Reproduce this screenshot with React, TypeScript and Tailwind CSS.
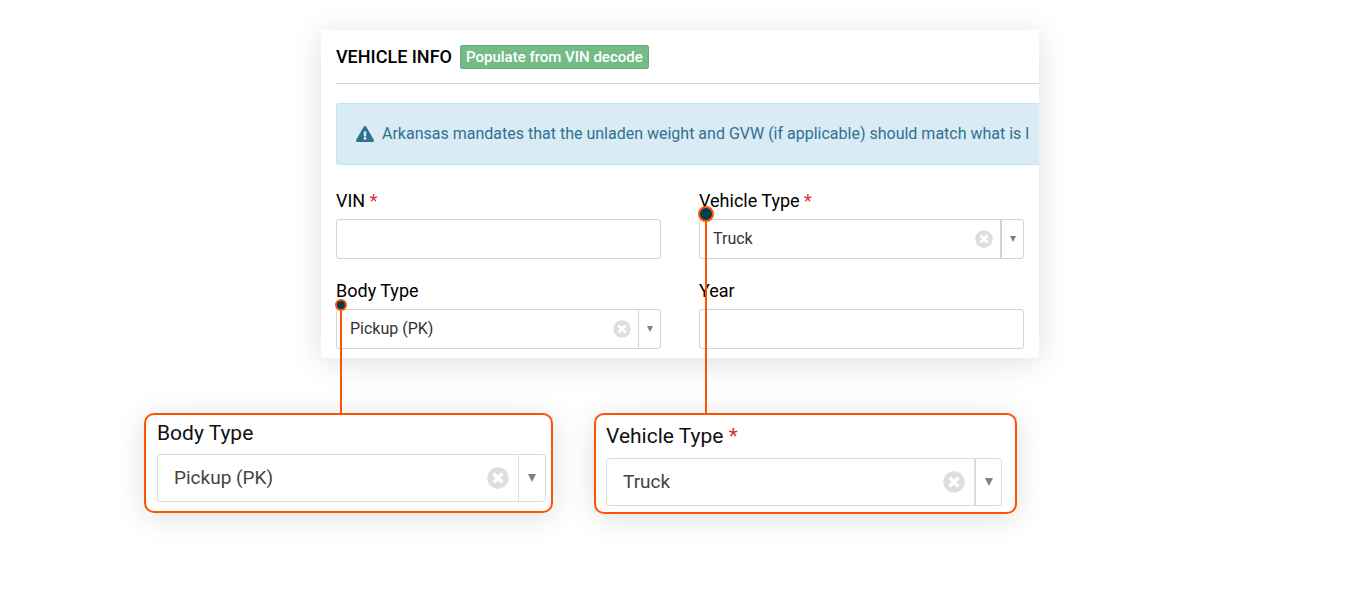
import React, { useRef, useState } from 'react';
import { FaExclamationTriangle, FaTimesCircle } from 'react-icons/fa';

type ComboProps = {
  id: string;
  options: string[];
  large?: boolean;
  thickDivider?: boolean;
};

type LabelProps = {
  htmlFor: string;
  text: string;
  required?: boolean;
  large?: boolean;
};

const FieldLabel = ({ htmlFor, text, required, large }: LabelProps) => (
  <label
    htmlFor={htmlFor}
    className={large ? 'block text-[21px] leading-[30px] text-[#111]' : 'mb-[5px] block text-[18px] leading-[27px] text-black'}
  >
    {text}
    {required && <span className="text-[#dc2f33]"> *</span>}
  </label>
);

const Combo = ({ id, options, large, thickDivider }: ComboProps) => {
  const [value, setValue] = useState(options[0]);
  const selectRef = useRef<HTMLSelectElement>(null);

  return (
    <div className={`flex items-stretch rounded-[3px] border bg-white ${large ? 'h-12 border-[#dcdcdc]' : 'h-10 border-[#d3d3d3]'}`}>
      <select
        ref={selectRef}
        id={id}
        value={value}
        onChange={(e) => setValue(e.target.value)}
        className={`min-w-0 flex-1 appearance-none bg-transparent outline-none ${large ? 'pl-4 text-[19px] text-[#444]' : 'pl-[13px] text-[16px] text-[#333]'}`}
      >
        <option value="" />
        {options.map((option) => (
          <option key={option} value={option}>{option}</option>
        ))}
      </select>

      <button
        type="button"
        aria-label="Clear selection"
        onClick={() => setValue('')}
        className={`flex items-center text-[#dedede] ${large ? 'px-[9px]' : 'px-[7px]'}`}
      >
        <FaTimesCircle size={large ? 22 : 18} />
      </button>

      <button
        type="button"
        aria-label="Show options"
        onClick={() => selectRef.current?.showPicker()}
        className={`flex items-center justify-center text-[#808080] ${large ? 'w-[27px] border-[#dcdcdc]' : 'border-[#d3d3d3]'} ${!large && (thickDivider ? 'w-[23px]' : 'w-[22px]')} ${thickDivider ? 'border-l-2' : 'border-l'}`}
      >
        <svg viewBox="0 0 6 6" className={large ? 'h-2 w-2' : 'h-[6px] w-[6px]'} fill="currentColor">
          <path d="M0 0h6L3 6z" />
        </svg>
      </button>
    </div>
  );
};

const TextField = ({ id }: { id: string }) => (
  <input id={id} type="text" className="block h-10 w-full rounded-[3px] border border-[#d3d3d3] bg-white px-3 text-[16px] outline-none" />
);

export default function App() {
  return (
    <main className="overflow-hidden bg-white px-4 pt-[30px] pb-14 font-['Roboto',sans-serif]">
      <div className="mx-auto max-w-[1072px]">
        <section className="mx-auto max-w-[718px] overflow-hidden bg-white pb-[9px] pl-[15px] shadow-[0_4px_30px_rgba(0,0,0,0.13)]">
          <header className="flex h-[54px] items-center gap-2 border-b border-[#d0d6db]">
            <h2 className="text-[18px] font-medium text-black">VEHICLE INFO</h2>
            <button type="button" className="h-6 rounded-[2px] border border-[#6bae7d] bg-[#75bb87] px-[5px] text-[15px] leading-[22px] font-medium text-white">
              Populate from VIN decode
            </button>
          </header>

          <div role="alert" className="mt-[19px] flex h-[62px] items-center gap-2 overflow-hidden rounded-l-[3px] border border-r-0 border-[#bce8f1] bg-[#d9ebf5] pl-[19px] text-[16px] whitespace-nowrap text-[#31708f]">
            <FaExclamationTriangle size={18} className="shrink-0" />
            <p>Arkansas mandates that the unladen weight and GVW (if applicable) should match what is l</p>
          </div>

          <form className="mt-[22px] grid grid-cols-2 gap-x-[38px] gap-y-[18px] pr-[15px]">
            <div>
              <FieldLabel htmlFor="vin" text="VIN" required />
              <TextField id="vin" />
            </div>
            <div>
              <FieldLabel htmlFor="vehicle-type" text="Vehicle Type" required />
              <Combo id="vehicle-type" options={['Truck']} thickDivider />
            </div>
            <div>
              <FieldLabel htmlFor="body-type" text="Body Type" />
              <Combo id="body-type" options={['Pickup (PK)']} />
            </div>
            <div>
              <FieldLabel htmlFor="year" text="Year" />
              <TextField id="year" />
            </div>
          </form>
        </section>

        {/* enlarged fields, each with a pin leading back to the form */}
        <div className="mt-[55px] flex items-start gap-[41px]">
          <div className="relative h-[100px] max-w-[409px] flex-1 rounded-[10px] border-2 border-[#ff5300] bg-white pt-[3px] pr-[5px] pl-[11px] shadow-[0_4px_30px_rgba(0,0,0,0.13)]">
            <span className="absolute bottom-full left-[194px] h-[110px] w-[2px] bg-[#ff5300]" />
            <span className="absolute bottom-[200px] left-[189px] h-3 w-3 rounded-full border-2 border-[#ff5300] bg-[#003e52]" />
            <FieldLabel htmlFor="body-type-zoom" text="Body Type" large />
            <div className="mt-[6px]">
              <Combo id="body-type-zoom" options={['Pickup (PK)']} large />
            </div>
          </div>

          <div className="relative h-[101px] max-w-[423px] flex-1 rounded-[10px] border-2 border-[#ff5300] bg-white pt-[6px] pr-[13px] pl-[10px] shadow-[0_4px_30px_rgba(0,0,0,0.13)]">
            <span className="absolute bottom-full left-[109px] h-[200px] w-[2px] bg-[#ff5300]" />
            <span className="absolute bottom-[290px] left-[102px] h-4 w-4 rounded-full border-2 border-[#ff5300] bg-[#003e52]" />
            <FieldLabel htmlFor="vehicle-type-zoom" text="Vehicle Type" required large />
            <div className="mt-[7px]">
              <Combo id="vehicle-type-zoom" options={['Truck']} large thickDivider />
            </div>
          </div>
        </div>
      </div>
    </main>
  );
}
